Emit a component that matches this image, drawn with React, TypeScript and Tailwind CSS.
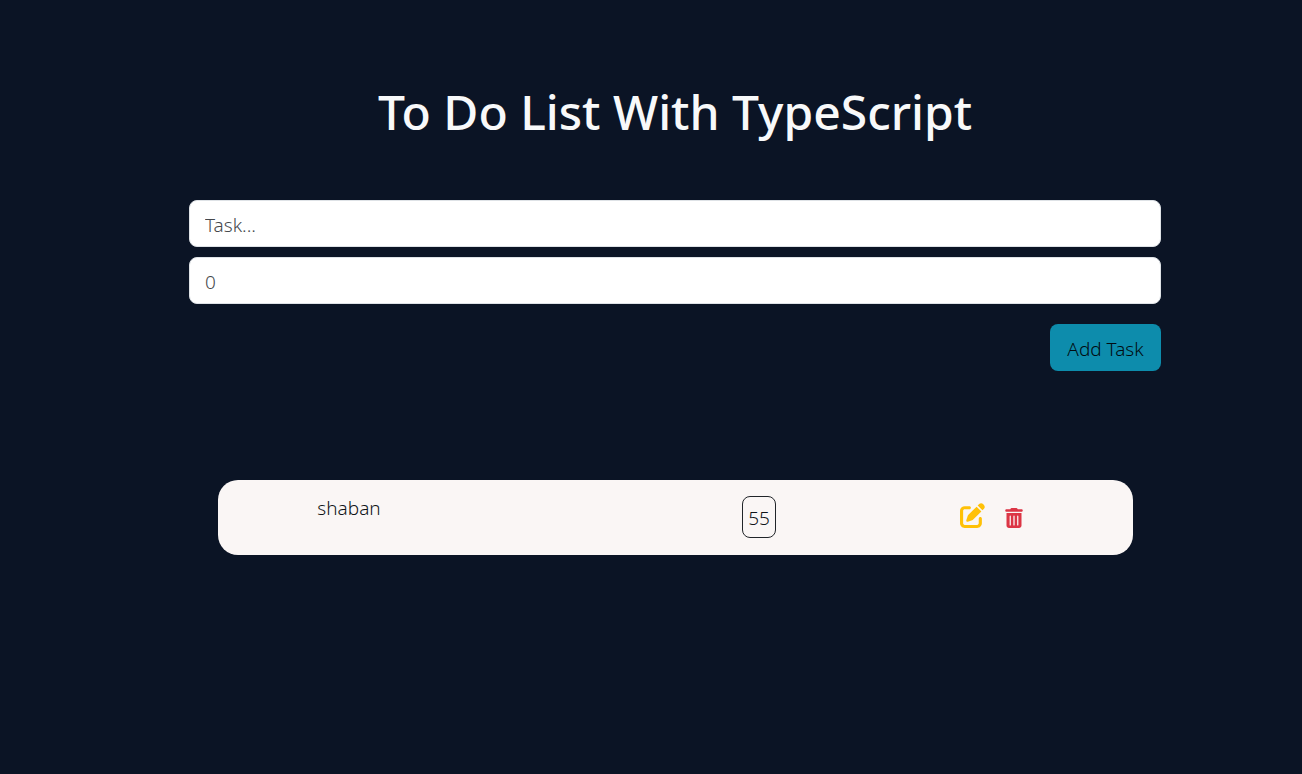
import { useState, type FormEvent } from "react";
import { FaPenToSquare, FaTrashCan } from "react-icons/fa6";

type Task = { id: number; title: string; days: number };

const initialTasks: Task[] = [{ id: 1, title: "shaban", days: 55 }];

const fieldClass =
  "h-[47px] w-full rounded-lg border border-[#dee2e6] bg-white px-[15px] pt-[3px] text-[19px] font-light text-[#212529] placeholder:text-[#45484c] focus:outline-none focus:ring-2 focus:ring-[#0d8cac]";

function TaskRow({ task, onDelete, onEdit }: { task: Task; onDelete: () => void; onEdit: () => void }) {
  return (
    <li className="grid min-h-[75px] grid-cols-[262px_1fr_357px] items-start rounded-[20px] bg-[#faf6f5] py-4 text-[19px] leading-6 font-light text-[#101418]">
      <span className="text-center">{task.title}</span>
      <span className="flex justify-end">
        <span className="flex h-[42px] w-[34px] items-center justify-center rounded-lg border border-[#212529] pt-[2px]">
          {task.days}
        </span>
      </span>
      <span className="flex h-8 items-end gap-[19px] pl-[184px]">
        <button type="button" aria-label="Edit task" onClick={onEdit} className="text-[25px] text-[#ffc107]">
          <FaPenToSquare />
        </button>
        <button type="button" aria-label="Delete task" onClick={onDelete} className="text-[20px] text-[#dc3545]">
          <FaTrashCan />
        </button>
      </span>
    </li>
  );
}

export default function App() {
  const [tasks, setTasks] = useState(initialTasks);
  const [title, setTitle] = useState("");
  const [days, setDays] = useState("");

  const addTask = (event: FormEvent) => {
    event.preventDefault();
    if (!title.trim()) return;
    setTasks([...tasks, { id: Date.now(), title, days: Number(days) }]);
    setTitle("");
    setDays("");
  };

  const removeTask = (id: number) => setTasks(tasks.filter((task) => task.id !== id));

  const editTask = (task: Task) => {
    setTitle(task.title);
    setDays(String(task.days));
    removeTask(task.id);
  };

  return (
    <div className="min-h-screen bg-[#0b1425] pr-[141px] pl-[189px] font-['Noto_Sans','Open_Sans',sans-serif]">
      <main className="pt-20">
        <h1 className="text-center text-[48px] leading-[64px] font-medium text-[#f8f9fa]">
          To Do List With TypeScript
        </h1>
        <form onSubmit={addTask} className="mt-14 flex flex-col gap-[10px]">
          <input
            type="text"
            aria-label="Task"
            placeholder="Task..."
            value={title}
            onChange={(event) => setTitle(event.target.value)}
            className={fieldClass}
          />
          <input
            type="text"
            inputMode="numeric"
            aria-label="Days"
            placeholder="0"
            value={days}
            onChange={(event) => setDays(event.target.value)}
            className={fieldClass}
          />
          <button
            type="submit"
            className="mt-[10px] h-[47px] w-[111px] self-end rounded-lg bg-[#0d8cac] pt-[3px] text-[19px] font-light text-[#020c12]"
          >
            Add Task
          </button>
        </form>
        <ul className="mr-[28px] ml-[29px] mt-[109px] flex flex-col gap-4">
          {tasks.map((task) => (
            <TaskRow key={task.id} task={task} onDelete={() => removeTask(task.id)} onEdit={() => editTask(task)} />
          ))}
        </ul>
      </main>
    </div>
  );
}
